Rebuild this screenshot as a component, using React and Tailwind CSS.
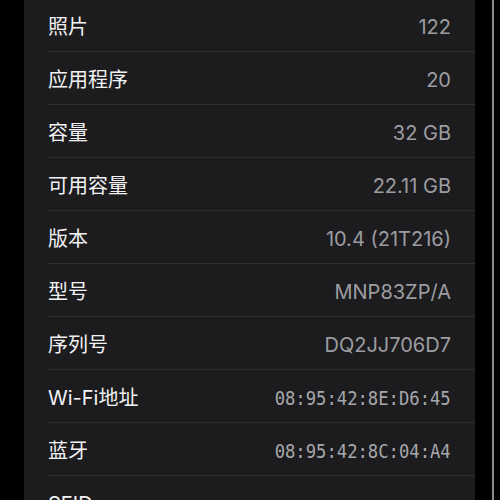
import React from "react";

const rows = [
  ["照片", "122"],
  ["应用程序", "20"],
  ["容量", "32 GB"],
  ["可用容量", "22.11 GB"],
  ["版本", "10.4 (21T216)"],
  ["型号", "MNP83ZP/A"],
  ["序列号", "DQ2JJ706D7"],
  ["Wi-Fi地址", "08:95:42:8E:D6:45", true],
  ["蓝牙", "08:95:42:8C:04:A4", true],
  ["SEID", "›"],
];

export default function App() {
  return (
    <div className="w-[500px] h-[500px] bg-black flex overflow-hidden">
      <div className="w-[24px] shrink-0" />
      <div
        className="w-[451px] shrink-0 bg-[#1c1c1e] flex flex-col overflow-hidden"
        style={{ fontFamily: 'Inter, "Noto Sans CJK SC", sans-serif' }}
      >
        <div className="-mt-[1px] flex flex-col">
          {rows.map(([label, value, mono], i) => (
            <div key={i} className="pl-[24px] shrink-0">
              <div className="h-[53px] border-b border-[#2e2e30] flex items-center justify-between pr-[24px] pt-[4px]">
                <span className="text-[20px] text-[#f2f2f4] leading-none">
                  {label}
                </span>
                {mono ? (
                  <span
                    className="text-[20px] text-[#a6a6ab] leading-none origin-right scale-x-[0.86] inline-block whitespace-nowrap"
                    style={{ fontFamily: '"DejaVu Sans Mono", monospace' }}
                  >
                    {value}
                  </span>
                ) : (
                  <span className="text-[20px] text-[#9c9ca1] leading-none">
                    {value}
                  </span>
                )}
              </div>
            </div>
          ))}
        </div>
      </div>
      <div className="w-[17px] shrink-0" />
      <div className="w-[2px] shrink-0 bg-[#8a8a8a]" />
      <div className="flex-1" />
    </div>
  );
}
